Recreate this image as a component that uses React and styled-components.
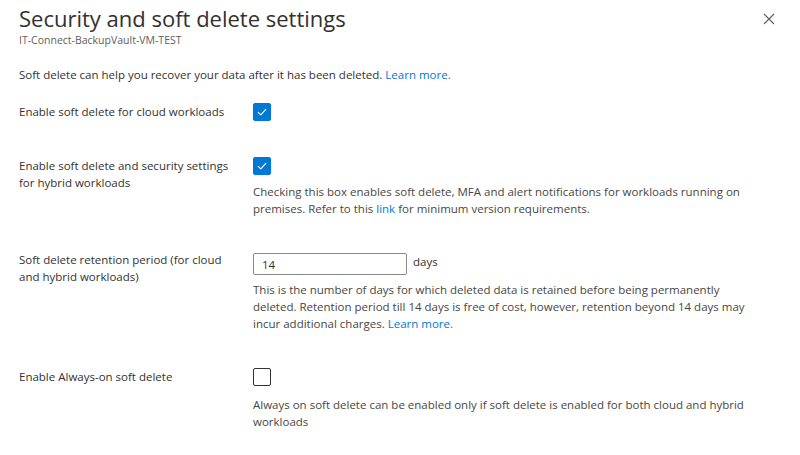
import React, { useState } from "react";
import styled, { createGlobalStyle } from "styled-components";

const GlobalStyle = createGlobalStyle`
  html, body {
    margin: 0;
    padding: 0;
    background: #ffffff;
  }
  body {
    font-family: "Open Sans", "Noto Sans", sans-serif;
    color: #323130;
  }
`;

const CheckIcon = () => (
  <svg width="12" height="12" viewBox="0 0 12 12" fill="none">
    <path d="M2.2 6.3 L4.8 8.8 L9.8 3.4" stroke="#ffffff" strokeWidth="1.1" strokeLinecap="round" strokeLinejoin="round" />
  </svg>
);

const CloseIcon = () => (
  <svg width="12" height="12" viewBox="0 0 12 12">
    <path d="M1 1 L11 11 M11 1 L1 11" stroke="#605e5c" strokeWidth="1.1" />
  </svg>
);

const App = () => {
  const [cloud, setCloud] = useState(true);
  const [hybrid, setHybrid] = useState(true);
  const [alwaysOn, setAlwaysOn] = useState(false);
  const [days, setDays] = useState("14");

  return (
    <>
      <GlobalStyle />
      <Panel>
        <Header>
          <div>
            <Title>Security and soft delete settings</Title>
            <Subtitle>IT-Connect-BackupVault-VM-TEST</Subtitle>
          </div>
          <CloseButton aria-label="Close">
            <CloseIcon />
          </CloseButton>
        </Header>

        <Intro>
          Soft delete can help you recover your data after it has been deleted. <Link href="#">Learn more.</Link>
        </Intro>

        <Form>
          <Row>
            <Label>Enable soft delete for cloud workloads</Label>
            <Control>
              <Box checked={cloud} onClick={() => setCloud(!cloud)}>
                {cloud && <CheckIcon />}
              </Box>
            </Control>
          </Row>

          <Row>
            <Label>Enable soft delete and security settings for hybrid workloads</Label>
            <Control>
              <Box checked={hybrid} onClick={() => setHybrid(!hybrid)}>
                {hybrid && <CheckIcon />}
              </Box>
              <Help>
                Checking this box enables soft delete, MFA and alert notifications for workloads running on
                premises. Refer to this <Link href="#">link</Link> for minimum version requirements.
              </Help>
            </Control>
          </Row>

          <Row>
            <Label $shift={-2}>Soft delete retention period (for cloud and hybrid workloads)</Label>
            <Control>
              <InputLine>
                <TextInput value={days} onChange={(e) => setDays(e.target.value)} />
                <Unit>days</Unit>
              </InputLine>
              <Help $top={6}>
                This is the number of days for which deleted data is retained before being permanently
                deleted. Retention period till 14 days is free of cost, however, retention beyond 14 days may
                incur additional charges. <Link href="#">Learn more.</Link>
              </Help>
            </Control>
          </Row>

          <Row>
            <Label>Enable Always-on soft delete</Label>
            <Control>
              <Box checked={alwaysOn} onClick={() => setAlwaysOn(!alwaysOn)}>
                {alwaysOn && <CheckIcon />}
              </Box>
              <Help $top={10}>
                Always on soft delete can be enabled only if soft delete is enabled for both cloud and hybrid
                workloads
              </Help>
            </Control>
          </Row>
        </Form>
      </Panel>
    </>
  );
};

const Panel = styled.div`
  width: 800px;
  height: 455px;
  box-sizing: border-box;
  padding: 3px 25px 0 19px;
  overflow: hidden;
`;

const Header = styled.div`
  display: flex;
  justify-content: space-between;
  align-items: flex-start;
`;

const Title = styled.h1`
  margin: 0;
  font-size: 22px;
  font-weight: 400;
  line-height: 31px;
  color: #323130;
`;

const Subtitle = styled.div`
  font-size: 10.5px;
  line-height: 14px;
  margin-top: -1px;
  color: #605e5c;
`;

const CloseButton = styled.button`
  margin-top: 10px;
  padding: 0;
  border: 0;
  background: none;
  cursor: pointer;
  display: flex;
`;

const Intro = styled.p`
  margin: 20px 0 0;
  font-size: 11.5px;
  line-height: 16px;
`;

const Link = styled.a`
  color: #0078d4;
  text-decoration: none;
`;

const Form = styled.div`
  display: flex;
  flex-direction: column;
  gap: 36px;
  margin-top: 20px;
`;

const Row = styled.div`
  display: grid;
  grid-template-columns: 234px 1fr;
  font-size: 11.5px;
  line-height: 17px;
`;

const Label = styled.div`
  padding-right: 20px;
  margin-top: ${(p) => p.$shift || 0}px;
  color: #323130;
`;

const Control = styled.div`
  display: flex;
  flex-direction: column;
  align-items: flex-start;
  padding-right: 10px;
`;

const Box = styled.div`
  width: 18px;
  height: 18px;
  box-sizing: border-box;
  border-radius: 2px;
  border: 1px solid ${(p) => (p.checked ? "#0078d4" : "#323130")};
  background: ${(p) => (p.checked ? "#0078d4" : "#ffffff")};
  display: flex;
  align-items: center;
  justify-content: center;
  cursor: pointer;
`;

const Help = styled.div`
  margin-top: ${(p) => p.$top || 8}px;
  color: #484644;
  max-width: 510px;
`;

const InputLine = styled.div`
  display: flex;
  align-items: flex-start;
  gap: 6px;
`;

const TextInput = styled.input`
  width: 154px;
  height: 22px;
  box-sizing: border-box;
  border: 1px solid #8a8886;
  border-radius: 2px;
  padding: 0 8px;
  font-family: inherit;
  font-size: 11.5px;
  color: #323130;
  outline: none;
`;

const Unit = styled.span`
  line-height: 17px;
`;

export default App;
